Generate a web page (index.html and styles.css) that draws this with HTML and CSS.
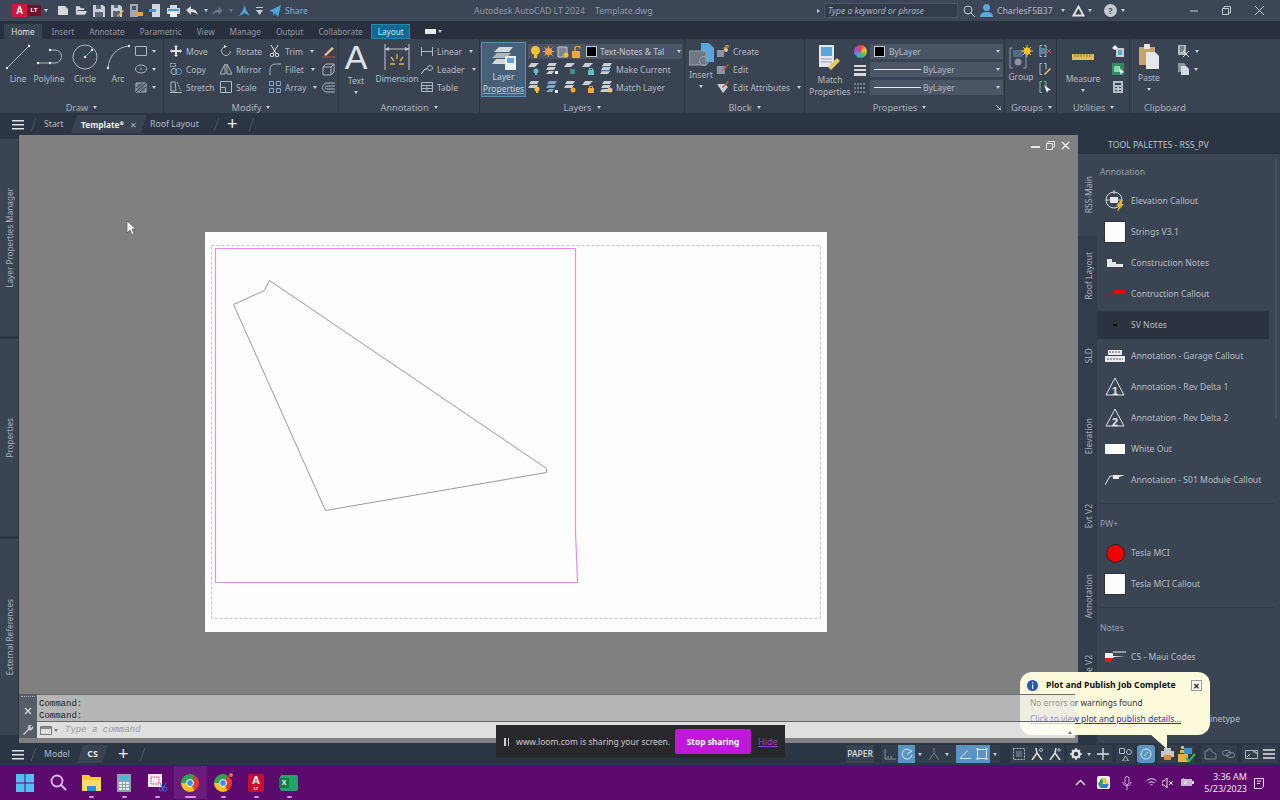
FILE: index.html
```html
<!DOCTYPE html>
<html lang="en">
<head>
    <meta charset="UTF-8">
    <title>Autodesk AutoCAD LT 2024 - Template.dwg</title>
    <link rel="stylesheet" href="styles.css">
</head>
<body>
<div class="app">

    <!-- Title bar -->
    <div class="titlebar">
        <div class="logo"><span class="logo-a">A</span><span class="logo-lt">LT</span></div>
        <i class="caret qa-first"></i>
        <div class="qa">
            <svg width="12" height="11" viewBox="0 0 12 11"><path d="M1 1h7l3 3v6H1z" fill="#d5d9de"/></svg>
            <svg width="12" height="11" viewBox="0 0 13 11"><path d="M1 10V1h4l1 2h4v2H3L1 10zM3 6h10l-2 4H1z" fill="#d5d9de"/></svg>
            <svg width="12" height="12" viewBox="0 0 12 12"><path d="M0 0h10l2 2v10H0z" fill="#c9ced5"/><path d="M3 0h5v4H3zM2 7h8v5H2z" fill="#5a6577"/></svg>
            <svg width="13" height="12" viewBox="0 0 13 12"><path d="M0 0h9l2 2v10H0z" fill="#c9ced5"/><path d="M3 0h4v3H3zM2 6h7v6H2z" fill="#5a6577"/><path d="M6 11l6-6 1 1-6 6z" fill="#e8b23a"/></svg>
            <svg width="13" height="13" viewBox="0 0 13 13"><path d="M0 0h8v13H0z" fill="#9fa8b3"/><path d="M2 2h4v4H2z" fill="#4c5768"/><path d="M6 8h7v4H6z" fill="#e8a63a"/></svg>
            <svg width="12" height="13" viewBox="0 0 12 13"><path d="M3 0h8v13H3z" fill="#d5d9de"/><path d="M0 5h7v3H0z" fill="#3f9fd0"/></svg>
            <svg width="13" height="12" viewBox="0 0 13 12"><path d="M3 0h7v3H3zM0 3h13v6H0z" fill="#d5d9de"/><path d="M3 7h7v5H3z" fill="#eef0f2"/><path d="M1 4h11v2H1z" fill="#3f9fd0"/></svg>
            <svg width="12" height="9" viewBox="0 0 12 9"><path d="M5 0v3c4 0 6 2 7 6-2-2-4-3-7-3v3L0 4z" fill="#d5d9de"/></svg>
            <i class="caret"></i>
            <svg class="gap-s" width="11" height="8" viewBox="0 0 12 9"><path d="M7 0v3C3 3 1 5 0 9c2-2 4-3 7-3v3l5-5z" fill="#6c7686"/></svg>
            <i class="caret dim"></i>
            <svg width="11" height="11" viewBox="0 0 11 11"><path d="M5.500 0L7 5l4 6-5.500-3L0 11l4-6z" fill="#4da3dc"/></svg>
            <svg width="7" height="8" viewBox="0 0 7 8"><path d="M0 0h7v1H0zM0 3h7L3.500 8z" fill="#c9ced5"/></svg>
            <svg width="12" height="12" viewBox="0 0 12 12"><path d="M0 6l12-6-3 12-3-4-2 3V7z" fill="#4da3dc"/></svg>
            <span class="share">Share</span>
        </div>
        <div class="app-name">Autodesk AutoCAD LT 2024<span class="doc-name">Template.dwg</span></div>
        <i class="search-tri"></i>
        <div class="search-box">Type a keyword or phrase</div>
        <svg class="search-glass" width="12" height="12" viewBox="0 0 12 12"><circle cx="5" cy="5" r="4" fill="none" stroke="#c2c8d0"/><path d="M8 8l4 4" stroke="#c2c8d0"/></svg>
        <svg class="user-icon" width="13" height="13" viewBox="0 0 13 13"><circle cx="6.500" cy="3.500" r="3.500" fill="#5aa6e0"/><path d="M0 13c0-4 3-5 6.500-5s6.500 1 6.500 5z" fill="#5aa6e0"/></svg>
        <span class="user-name">CharlesF5B37</span>
        <i class="caret user-caret"></i>
        <svg class="tri-icon" width="13" height="12" viewBox="0 0 13 12"><path d="M6.500 1.500L1.500 10.500h10z" fill="none" stroke="#dfe3e8" stroke-width="1.800"/></svg>
        <i class="caret"></i>
        <div class="help">?</div>
        <i class="caret"></i>
        <div class="win-btns">
            <svg width="8" height="8" viewBox="0 0 8 8"><path d="M0 4h8" stroke="#c2c8d0"/></svg>
            <svg width="9" height="9" viewBox="0 0 9 9"><path d="M2 2V.500h6.500V7H7M.500 2.500h6v6h-6z" fill="none" stroke="#c2c8d0"/></svg>
            <svg width="9" height="9" viewBox="0 0 9 9"><path d="M0 0l9 9M9 0L0 9" stroke="#c2c8d0"/></svg>
        </div>
    </div>

    <!-- Ribbon tabs -->
    <div class="ribbon-tabs">
        <span class="rtab home">Home</span>
        <span class="rtab">Insert</span>
        <span class="rtab">Annotate</span>
        <span class="rtab">Parametric</span>
        <span class="rtab">View</span>
        <span class="rtab">Manage</span>
        <span class="rtab">Output</span>
        <span class="rtab">Collaborate</span>
        <span class="rtab layout">Layout</span>
        <span class="rtab-extra"><b></b><i class="caret"></i></span>
    </div>

    <!-- Ribbon -->
    <div class="ribbon">

        <div class="panel p-draw">
            <div class="panel-body">
                <div class="tool w-32">
                    <svg width="26" height="26" viewBox="0 0 26 26"><path d="M2 24L24 2" stroke="#aeb6c0"/><circle cx="2" cy="24" r="1.200" fill="#e6e9ed"/><circle cx="24" cy="2" r="1.200" fill="#e6e9ed"/></svg>
                    <span>Line</span>
                </div>
                <div class="tool w-30">
                    <svg width="26" height="26" viewBox="0 0 26 26"><path d="M14 6h5a6.500 6.500 0 0 1 0 13H2" fill="none" stroke="#aeb6c0"/><circle cx="14" cy="6" r="1.200" fill="#e6e9ed"/><circle cx="2" cy="19" r="1.200" fill="#e6e9ed"/><circle cx="14" cy="19" r="1.200" fill="#e6e9ed"/></svg>
                    <span>Polyline</span>
                </div>
                <div class="tool w-42">
                    <svg width="26" height="26" viewBox="0 0 26 26"><circle cx="13" cy="13" r="12" fill="none" stroke="#aeb6c0"/><path d="M13 13l7-7" stroke="#5aa6e0"/><circle cx="13" cy="13" r="1.200" fill="#e6e9ed"/><circle cx="20" cy="6" r="1.200" fill="#e6e9ed"/></svg>
                    <span>Circle</span>
                </div>
                <div class="tool w-24">
                    <svg width="24" height="26" viewBox="0 0 24 26"><path d="M2 24C3 12 11 3 23 2" fill="none" stroke="#aeb6c0"/><circle cx="2" cy="24" r="1.200" fill="#e6e9ed"/><circle cx="23" cy="2" r="1.200" fill="#e6e9ed"/></svg>
                    <span>Arc</span>
                </div>
                <div class="draw-small">
                    <div><svg width="12" height="10" viewBox="0 0 12 10"><path d="M.500.500h11v9H.500z" fill="none" stroke="#aeb6c0"/></svg><i class="caret"></i></div>
                    <div><svg width="12" height="10" viewBox="0 0 12 10"><ellipse cx="6" cy="5" rx="5.500" ry="4" fill="none" stroke="#aeb6c0"/><circle cx="6" cy="5" r="1" fill="#5aa6e0"/></svg><i class="caret"></i></div>
                    <div><svg width="12" height="11" viewBox="0 0 12 11"><path d="M1 1h10v9H1z" fill="#6d7785" stroke="#aeb6c0"/><path d="M1 10l10-9M1 6l6-5M5 10l6-5" stroke="#3a4351"/></svg><i class="caret"></i></div>
                </div>
            </div>
            <div class="panel-title">Draw<i class="caret"></i></div>
        </div>

        <div class="panel p-modify">
            <div class="panel-body modify-grid">
                <div class="row"><svg width="12" height="12" viewBox="0 0 12 12"><path d="M6 0l2 2H7v3h3V4l2 2-2 2V7H7v3h1l-2 2-2-2h1V7H2v1L0 6l2-2v1h3V2H4z" fill="#dfe3e8"/></svg>Move</div>
                <div class="row"><svg width="12" height="12" viewBox="0 0 12 12"><path d="M10.500 6a4.500 4.500 0 1 1-4.500-4.500" fill="none" stroke="#aeb6c0"/><path d="M4 0l3 1.500L4 3z" fill="#dfe3e8"/></svg>Rotate</div>
                <div class="row"><svg width="12" height="12" viewBox="0 0 12 12"><circle cx="3" cy="10" r="1.800" fill="none" stroke="#dfe3e8"/><circle cx="8" cy="10" r="1.800" fill="none" stroke="#dfe3e8"/><path d="M4 8.500L9 0M7 8.500L2 0" stroke="#dfe3e8"/></svg>Trim<i class="caret"></i></div>
                <svg width="13" height="13" viewBox="0 0 13 13"><path d="M2 10L10 2l2 1.500L4 11z" fill="#e8c48a"/><path d="M0 12h13" stroke="#d0463a"/></svg>

                <div class="row"><svg width="12" height="12" viewBox="0 0 12 12"><path d="M.500.500h5v3h-5z" fill="none" stroke="#aeb6c0" stroke-dasharray="2 1"/><circle cx="4" cy="8.500" r="3" fill="none" stroke="#aeb6c0"/><circle cx="8.500" cy="8.500" r="3" fill="none" stroke="#5aa6e0"/></svg>Copy</div>
                <div class="row"><svg width="12" height="12" viewBox="0 0 12 12"><path d="M5 1v10H0zM7 1v10h5z" fill="none" stroke="#aeb6c0"/></svg>Mirror</div>
                <div class="row"><svg width="12" height="12" viewBox="0 0 12 12"><path d="M1 12V7q0-6 6-6h5" fill="none" stroke="#aeb6c0"/></svg>Fillet<i class="caret"></i></div>
                <svg width="13" height="13" viewBox="0 0 13 13"><path d="M1 4h8v8H1zM1 4l3-3h8v8l-3 3M9 4l3-3" fill="none" stroke="#aeb6c0"/></svg>

                <div class="row"><svg width="12" height="12" viewBox="0 0 12 12"><path d="M1 1h4l1 9H1zM0 11.500h12" fill="none" stroke="#aeb6c0"/><path d="M7 1l4 9" stroke="#aeb6c0" stroke-dasharray="2 1"/></svg>Stretch</div>
                <div class="row"><svg width="12" height="12" viewBox="0 0 12 12"><path d="M.500.500h11v11H.500zM.500 6.500h5v5" fill="none" stroke="#aeb6c0"/></svg>Scale</div>
                <div class="row"><svg width="12" height="12" viewBox="0 0 12 12"><path d="M.500.500h4v4h-4zM7.500.500h4v4h-4zM.500 7.500h4v4h-4zM7.500 7.500h4v4h-4z" fill="none" stroke="#7fa8cc"/></svg>Array<i class="caret"></i></div>
                <svg width="13" height="11" viewBox="0 0 13 11"><path d="M13 1H5a4.500 4.500 0 0 0 0 9h8M13 4H5a1.500 1.500 0 0 0 0 3h8" fill="none" stroke="#aeb6c0"/></svg>
            </div>
            <div class="panel-title">Modify<i class="caret"></i></div>
        </div>

        <div class="panel p-anno">
            <div class="panel-body">
                <div class="tool w-34 t-text"><span class="big-a">A</span><span>Text</span><i class="caret"></i></div>
                <div class="tool w-48">
                    <svg width="26" height="26" viewBox="0 0 26 26"><path d="M1 0v26M25 0v26M1 5h24" fill="none" stroke="#c2c8d0"/><path d="M1 5l4-2v4zM25 5l-4-2v4z" fill="#c2c8d0"/><path d="M13 10v5M7 13l3 4M19 13l-3 4M6 20h5M15 20h5" stroke="#e8b23a" stroke-width="1.300"/></svg>
                    <span>Dimension</span>
                </div>
                <div class="anno-col">
                    <div class="row"><svg width="12" height="9" viewBox="0 0 12 9"><path d="M.500 0v9M11.500 0v9M1 4.500h10" stroke="#aeb6c0"/></svg>Linear<i class="caret"></i></div>
                    <div class="row"><svg width="12" height="9" viewBox="0 0 12 9"><path d="M0 9l4-5h2" fill="none" stroke="#dfe3e8"/><circle cx="9" cy="3" r="2.500" fill="none" stroke="#aeb6c0"/></svg>Leader<i class="caret"></i></div>
                    <div class="row"><svg width="12" height="10" viewBox="0 0 12 10"><path d="M.500.500h11v9H.500zM.500 3.500h11M.500 6.500h11M6 3.500v6" fill="none" stroke="#aeb6c0"/></svg>Table</div>
                </div>
            </div>
            <div class="panel-title">Annotation<i class="caret"></i></div>
        </div>

        <div class="panel p-layers">
            <div class="panel-body">
                <div class="layer-btn">
                    <svg width="26" height="26" viewBox="0 0 26 26"><path d="M8 2h14l-4 5H3z" fill="#d5d9de"/><path d="M6 8h14l-4 5H1z" fill="#aeb6c0"/><path d="M5 14h10v5H1z" fill="#d5d9de"/><path d="M14 11h11v14H14z" fill="#eef0f2"/><path d="M16 13h7v5h-7z" fill="#5aa6e0"/></svg>
                    <span>Layer</span><span class="l2">Properties</span>
                </div>
                <div class="layer-col">
                    <div class="layer-combo">
                        <svg width="9" height="12" viewBox="0 0 9 12"><circle cx="4.500" cy="4.500" r="4.500" fill="#f2c230"/><path d="M3 9h3v3H3z" fill="#f2c230"/></svg>
                        <svg width="11" height="11" viewBox="0 0 11 11"><circle cx="5.500" cy="5.500" r="3.500" fill="#f0a830"/><path d="M5.500 0v11M0 5.500h11M1.500 1.500l8 8M9.500 1.500l-8 8" stroke="#f0a830"/></svg>
                        <svg width="12" height="12" viewBox="0 0 12 12"><path d="M1 1h9v10H1z" fill="#7a8492" stroke="#c2c8d0"/><circle cx="9" cy="9" r="2.500" fill="#f2c230"/></svg>
                        <svg width="11" height="12" viewBox="0 0 11 12"><path d="M3 5V2.500a2.500 2.500 0 0 1 5 0" fill="none" stroke="#f0a830" stroke-width="1.300"/><path d="M0 5h8v7H0z" fill="#f0a830"/></svg>
                        <b class="swatch"></b>
                        <span class="combo-text">Text-Notes &amp; Tal</span>
                        <i class="caret"></i>
                    </div>
                    <div class="layer-row">
                        <svg width="12" height="12" viewBox="0 0 12 12"><path d="M3 0h8L7 4H0z" fill="#c9ced5"/><circle cx="8" cy="8" r="2.500" fill="#5fc4c4"/><path d="M7 10h2v2H7z" fill="#5fc4c4"/></svg>
                        <svg width="12" height="12" viewBox="0 0 12 12"><path d="M3 0h8L9 3H1zM2 4h8L8 7H0zM3 8h5L6 11H0z" fill="#c9ced5"/><path d="M9 8h3v3H9z" fill="#eef0f2"/></svg>
                        <svg width="12" height="12" viewBox="0 0 12 12"><path d="M3 0h8L7 4H0z" fill="#c9ced5"/><path d="M6 6h5v5H6z" fill="#3f8f8f"/></svg>
                        <svg width="12" height="12" viewBox="0 0 12 12"><path d="M3 0h8L7 4H0z" fill="#c9ced5"/><path d="M6 7h6v5H6z" fill="#5fc4c4"/><path d="M7.500 7V5.500h3V7" fill="none" stroke="#5fc4c4"/></svg>
                        <svg width="13" height="12" viewBox="0 0 13 12"><path d="M4 0h8L10 3H2zM3 4h8L9 7H1zM2 8h8L8 11H0z" fill="#c9ced5"/><path d="M2 4h9M1 8h9" stroke="#5aa6e0"/></svg>
                        <span class="lr-text">Make Current</span>
                    </div>
                    <div class="layer-row">
                        <svg width="12" height="12" viewBox="0 0 12 12"><path d="M3 0h8L9 3H1zM2 4h8L8 7H0z" fill="#c9ced5"/><circle cx="9" cy="8" r="2.500" fill="#f2c230"/><path d="M8 10h2v2H8z" fill="#f2c230"/></svg>
                        <svg width="12" height="12" viewBox="0 0 12 12"><path d="M3 0h8L9 3H1zM2 4h8L8 7H0zM3 8h5L6 11H0z" fill="#7fa8cc"/><path d="M9 9h3v3H9z" fill="#eef0f2"/></svg>
                        <svg width="12" height="12" viewBox="0 0 12 12"><path d="M3 0h8L9 3H1zM2 4h8L8 7H0z" fill="#c9ced5"/><circle cx="9" cy="9" r="2.500" fill="#f0a830"/></svg>
                        <svg width="12" height="12" viewBox="0 0 12 12"><path d="M3 0h8L7 4H0z" fill="#c9ced5"/><path d="M6 7h6v5H6z" fill="#f0a830"/><path d="M7.500 7V5.500h3V7" fill="none" stroke="#f0a830"/></svg>
                        <svg width="13" height="12" viewBox="0 0 13 12"><path d="M4 0h8L10 3H2zM3 4h8L9 7H1zM2 8h8L8 11H0z" fill="#c9ced5"/><circle cx="10" cy="9" r="2.500" fill="#e8c48a"/></svg>
                        <span class="lr-text">Match Layer</span>
                    </div>
                </div>
            </div>
            <div class="panel-title">Layers<i class="caret"></i></div>
        </div>

        <div class="panel p-block">
            <div class="panel-body">
                <div class="tool w-30 t-insert">
                    <svg width="25" height="24" viewBox="0 0 25 24"><path d="M12 0h8l5 5v14H12z" fill="#5aa6e0"/><path d="M0 8h17v14H0z" fill="#6d7785"/><path d="M0 8h17v14H0z" fill="none" stroke="#9aa3ae"/><circle cx="15" cy="18" r="4.500" fill="none" stroke="#9aa3ae"/></svg>
                    <span>Insert</span><i class="caret"></i>
                </div>
                <div class="block-col">
                    <div class="row"><svg width="12" height="12" viewBox="0 0 12 12"><path d="M0 5h7v7H0z" fill="#8a94a2"/><path d="M6 3h3V0h2v3" fill="none" stroke="#e8b23a"/><circle cx="9" cy="5" r="2" fill="#e8c48a"/></svg>Create</div>
                    <div class="row"><svg width="12" height="12" viewBox="0 0 12 12"><path d="M0 3h8v8H0z" fill="#8a94a2"/><path d="M5 7l6-6 1 1-6 6z" fill="#c9563a"/></svg>Edit</div>
                    <div class="row"><svg width="12" height="12" viewBox="0 0 12 12"><path d="M0 3h8l3 3-5 6z" fill="#c9ced5"/><path d="M5 6l6-6 1 1-6 6z" fill="#c9563a"/></svg>Edit Attributes<i class="caret"></i></div>
                </div>
            </div>
            <div class="panel-title">Block<i class="caret"></i></div>
        </div>

        <div class="panel p-props">
            <div class="panel-body">
                <div class="tool w-48 t-match">
                    <svg width="24" height="26" viewBox="0 0 24 26"><path d="M1 0h15v22H1z" fill="#e3e6ea"/><path d="M3 2h11v9H3z" fill="#5aa6e0"/><path d="M3 14h11M3 17h11" stroke="#9aa3ae"/><path d="M10 22l9-9 3 3-9 9z" fill="#e8c96a"/></svg>
                    <span>Match</span><span>Properties</span>
                </div>
                <div class="props-icons">
                    <b class="wheel"></b>
                    <svg width="12" height="11" viewBox="0 0 12 11"><path d="M0 0h12v2H0zM0 4h12v2H0zM0 8h12v3H0z" fill="#d5d9de"/></svg>
                    <svg width="12" height="11" viewBox="0 0 12 11"><path d="M0 1h12M0 5h12M0 9h12" stroke="#aeb6c0" stroke-dasharray="2 1"/></svg>
                </div>
                <div class="props-col">
                    <div class="combo"><b class="swatch"></b><span>ByLayer</span><i class="caret"></i></div>
                    <div class="combo"><b class="lw"></b><span>ByLayer</span><i class="caret"></i></div>
                    <div class="combo"><b class="lw"></b><span>ByLayer</span><i class="caret"></i></div>
                </div>
            </div>
            <div class="panel-title">Properties<i class="caret"></i><svg class="launcher" width="5" height="5" viewBox="0 0 5 5"><path d="M0 0l5 5M5 1v4H1" fill="none" stroke="#c2c8d0"/></svg></div>
        </div>

        <div class="panel p-groups">
            <div class="panel-body">
                <div class="tool w-30 t-group">
                    <svg width="24" height="24" viewBox="0 0 24 24"><path d="M4 3H1v20h3M14 23h3V8" fill="none" stroke="#8fa0b4"/><path d="M4 5h10v7H4z" fill="#4d6c8c"/><circle cx="9" cy="17" r="3.500" fill="#8a94a2"/><circle cx="18" cy="6" r="3.500" fill="#f2c230"/><path d="M18 0v12M12 6h12M14 2l8 8M22 2l-8 8" stroke="#f2c230"/></svg>
                    <span>Group</span>
                </div>
                <div class="groups-col">
                    <svg width="12" height="12" viewBox="0 0 12 12"><path d="M3 .500H1v11h2M5 .500h2v11H5" fill="none" stroke="#9fc0dc"/><path d="M7 3h-5v6h5" fill="#5d7fa0"/><path d="M8 4l4 4M12 4L8 8" stroke="#e0503f"/></svg>
                    <svg width="12" height="12" viewBox="0 0 12 12"><path d="M3 .500H1v11h2M5 .500h2v6" fill="none" stroke="#9fc0dc"/><path d="M5 11l6-6 1 1-6 6z" fill="#e8c96a"/></svg>
                    <svg width="12" height="12" viewBox="0 0 12 12"><path d="M3 .500H1v11h2M5 .500h2v6" fill="none" stroke="#6fc0a0"/><path d="M5 4l7 5-3 .500-1 2.500z" fill="#eef0f2"/></svg>
                </div>
            </div>
            <div class="panel-title">Groups<i class="caret"></i></div>
        </div>

        <div class="panel p-util">
            <div class="panel-body">
                <div class="tool w-50 t-measure">
                    <svg width="22" height="26" viewBox="0 0 22 26"><path d="M0 10h22v6H0z" fill="#e0bb5c"/><path d="M3 10v3M6 10v3M9 10v3M12 10v3M15 10v3M18 10v3" stroke="#8c6f2a"/></svg>
                    <span>Measure</span><i class="caret"></i>
                </div>
                <div class="util-col">
                    <svg width="12" height="12" viewBox="0 0 12 12"><path d="M4 3h8v9H4z" fill="#c9ced5"/><path d="M6 5h4v5H6z" fill="#5aa6e0"/><path d="M0 3l3-3 3 3-3 2z" fill="#eef0f2"/></svg>
                    <svg width="12" height="12" viewBox="0 0 12 12"><path d="M0 0h12v12H0z" fill="#2f8f63"/><path d="M2 3h6v6H2z" fill="#8fd0ae"/><path d="M7 5l5 4-2 1-1 2z" fill="#eef0f2"/></svg>
                    <svg width="10" height="12" viewBox="0 0 10 12"><path d="M0 0h10v12H0z" fill="#b5bcc6"/><path d="M2 2h6v2H2z" fill="#3a4351"/><path d="M2 6h2v1H2zM6 6h2v1H6zM2 9h2v1H2zM6 9h2v1H6z" fill="#3a4351"/></svg>
                </div>
            </div>
            <div class="panel-title">Utilities<i class="caret"></i></div>
        </div>

        <div class="panel p-clip">
            <div class="panel-body">
                <div class="tool w-36 t-paste">
                    <svg width="20" height="25" viewBox="0 0 20 25"><path d="M0 3h16v18H0z" fill="#c9a06a"/><path d="M5 0h6v5H5z" fill="#e3e6ea"/><path d="M7 8h9l4 4v13H7z" fill="#e3e6ea"/></svg>
                    <span>Paste</span><i class="caret"></i>
                </div>
                <div class="clip-col">
                    <div><svg width="12" height="12" viewBox="0 0 12 12"><path d="M0 0h8v10H0z" fill="#aeb6c0"/><path d="M2 2h4M2 4h4M2 6h3" stroke="#3a4351"/><path d="M5 6l6 6M11 6l-6 6" stroke="#dfe3e8"/></svg><i class="caret"></i></div>
                    <div><svg width="11" height="12" viewBox="0 0 11 12"><path d="M0 0h6l2 2v7H0z" fill="#8a94a2"/><path d="M3 3h5l3 3v6H3z" fill="#d5d9de"/></svg><i class="caret"></i></div>
                </div>
            </div>
            <div class="panel-title">Clipboard</div>
        </div>
    </div>

    <!-- Drawing tabs -->
    <div class="filetabs">
        <div class="burger"><b></b><b></b><b></b></div>
        <i class="slash"></i>
        <span class="ftab">Start</span>
        <span class="ftab active">Template*<em>&#10005;</em></span>
        <span class="ftab roof">Roof Layout</span>
        <i class="slash roof-end"></i>
        <span class="plus">+</span>
        <i class="slash"></i>
    </div>

    <!-- Main area -->
    <div class="main">
        <div class="side-strip">
            <div class="side-seg s1"><span>Layer Properties Manager</span></div>
            <div class="side-seg s2"><span>Properties</span></div>
            <div class="side-seg s3"><span>External References</span></div>
        </div>

        <div class="canvas">
            <svg class="cursor" width="11" height="16" viewBox="0 0 11 16"><path d="M1 1v12l3-3 2 5 2-1-2-5h4z" fill="#fff" stroke="#555" stroke-width=".7"/></svg>
            <div class="vp-btns">
                <svg width="9" height="9" viewBox="0 0 9 9"><path d="M0 5h9v2H0z" fill="#e8e8e8"/></svg>
                <svg width="9" height="9" viewBox="0 0 9 9"><path d="M2 2V.500h6.500V6H7M.500 2.500h6v6h-6z" fill="none" stroke="#e8e8e8"/></svg>
                <svg width="9" height="9" viewBox="0 0 9 9"><path d="M1 1l7 7M8 1L1 8" stroke="#e8e8e8" stroke-width="1.600"/></svg>
            </div>
            <div class="paper">
                <svg width="622" height="400" viewBox="0 0 622 400">
                    <rect x="6.500" y="13.500" width="609" height="373" fill="none" stroke="#c4c4c4" stroke-dasharray="3 2"/>
                    <path d="M370.500 16.500H10.500V350.500H372.500L370.500 300Z" fill="none" stroke="#e68ee6" stroke-width="1.200"/>
                    <path d="M28.500 72.500L59.500 58.500L64.500 48.500L341.500 236.500V240.500L120.500 278.500Z" fill="none" stroke="#9a9a9a"/>
                </svg>
            </div>
        </div>

        <div class="palette">
            <div class="pal-tabs">
                <div class="pal-tab t-active"><span>RSS-Main</span></div>
                <div class="pal-tab"><span>Roof Layout</span></div>
                <div class="pal-tab"><span>SLD</span></div>
                <div class="pal-tab"><span>Elevation</span></div>
                <div class="pal-tab"><span>Evt V2</span></div>
                <div class="pal-tab"><span>Annotation</span></div>
                <div class="pal-tab"><span>Module V2</span></div>
            </div>
            <div class="pal-right">
                <div class="pal-title">TOOL PALETTES - RSS_PV</div>
                <div class="pal-body">
                    <b class="pal-scroll"></b>
                    <div class="pal-group first">Annotation</div>
                    <div class="pal-item"><div class="pi">
                        <svg width="22" height="22" viewBox="0 0 22 22"><circle cx="10" cy="10" r="8" fill="none" stroke="#d5d9de"/><path d="M2 10h16M10 0v4" stroke="#d5d9de"/><path d="M6 7h8v6H6z" fill="#e3e6ea"/><path d="M17 10l-5 6h3l-2 6 7-8h-3l2-4z" fill="#e8b23a"/></svg>
                    </div>Elevation Callout</div>
                    <div class="pal-item"><div class="pi"><b class="white-sq"></b></div>Strings V3.1</div>
                    <div class="pal-item"><div class="pi">
                        <svg width="16" height="8" viewBox="0 0 16 8"><path d="M0 0h5v3h4v2h7v3H0z" fill="#e3e6ea"/></svg>
                    </div>Construction Notes</div>
                    <div class="pal-item"><div class="pi">
                        <svg width="20" height="10" viewBox="0 0 20 10"><path d="M9 1h11v4H9z" fill="#f00000"/><path d="M0 9l9-6" stroke="#a02020"/></svg>
                    </div>Contruction Callout</div>
                    <div class="pal-item selected"><div class="pi">
                        <svg width="4" height="2" viewBox="0 0 4 2"><path d="M0 0h4v2H0z" fill="#0a0a0a"/></svg>
                    </div>SV Notes</div>
                    <div class="pal-item"><div class="pi">
                        <svg width="20" height="12" viewBox="0 0 20 12"><path d="M3 0h14v5H3zM0 6h20v6H0z" fill="#e8ebee"/><path d="M4 2h12M2 9h16" stroke="#4a5464" stroke-dasharray="2 1"/></svg>
                    </div>Annotation - Garage Callout</div>
                    <div class="pal-item"><div class="pi"><div class="delta"><svg width="20" height="19" viewBox="0 0 20 19"><path d="M10 1L1 18h18z" fill="none" stroke="#dfe3e8"/></svg><span>1</span></div></div>Annotation - Rev Delta 1</div>
                    <div class="pal-item"><div class="pi"><div class="delta"><svg width="20" height="19" viewBox="0 0 20 19"><path d="M10 1L1 18h18z" fill="none" stroke="#dfe3e8"/></svg><span>2</span></div></div>Annotation - Rev Delta 2</div>
                    <div class="pal-item"><div class="pi"><b class="white-out"></b></div>White Out</div>
                    <div class="pal-item"><div class="pi">
                        <svg width="20" height="10" viewBox="0 0 20 10"><path d="M0 10L5 1h3" fill="none" stroke="#dfe3e8"/><path d="M8 0h12l-6 2v2H8z" fill="#e8ebee"/></svg>
                    </div>Annotation - S01 Module Callout</div>
                    <div class="pal-group pw">PW+</div>
                    <div class="pal-item"><div class="pi"><b class="red-dot"></b></div>Tesla MCI</div>
                    <div class="pal-item"><div class="pi"><b class="white-sq"></b></div>Tesla MCI Callout</div>
                    <div class="pal-group">Notes</div>
                    <div class="pal-item"><div class="pi">
                        <svg width="21" height="11" viewBox="0 0 21 11"><path d="M0 2h8v3h13L9 6 8 7H0z" fill="#eef0f2"/><path d="M0 7h8l-2 4H0z" fill="#e02020"/><path d="M8 1h13" stroke="#eef0f2"/></svg>
                    </div>CS - Maui Codes</div>
                    <div class="pal-item"></div>
                    <div class="pal-item clipped">inetype</div>
                </div>
            </div>
        </div>
    </div>

    <!-- Layout tabs and status bar -->
    <div class="statusbar">
        <div class="burger"><b></b><b></b><b></b></div>
        <i class="slash"></i>
        <span class="ltab">Model</span>
        <span class="ltab active">CS</span>
        <span class="plus">+</span>
        <i class="slash"></i>
        <div class="status-right">
            <span class="paper-btn">PAPER</span>
            <div class="st-group g-snap">
                <span class="st"><svg width="12" height="11" viewBox="0 0 12 11"><path d="M1 0v10h11" fill="none" stroke="#8a94a2"/><path d="M3 8h2M6 8h2" stroke="#8a94a2"/></svg></span>
                <span class="st on"><svg width="12" height="12" viewBox="0 0 12 12"><path d="M10 3a5 5 0 1 0 1 4" fill="none" stroke="#dfe8f2"/><path d="M6 6l5-3" stroke="#dfe8f2"/></svg></span>
                <i class="caret st-caret"></i>
                <span class="st"><svg width="10" height="12" viewBox="0 0 10 12"><path d="M5 0v5M0 12l5-7 5 7" fill="none" stroke="#7a8492"/></svg></span>
                <i class="caret st-caret"></i>
                <span class="st on st-angle"><svg width="12" height="10" viewBox="0 0 12 10"><path d="M12 9.500H1L9 1" fill="none" stroke="#dfe8f2"/></svg></span>
                <span class="st on"><svg width="12" height="12" viewBox="0 0 12 12"><path d="M1.500 1.500h9v9h-9z" fill="none" stroke="#dfe8f2"/><path d="M0 1h3M0 11h3M9 1h3M9 11h3" stroke="#dfe8f2"/></svg></span>
                <i class="caret st-caret"></i>
            </div>
            <div class="st-group g-anno">
                <span class="st"><svg width="12" height="12" viewBox="0 0 12 12"><path d="M.500.500h11v11H.500z" fill="none" stroke="#aeb6c0" stroke-dasharray="2 1"/><path d="M3 3h6v6H3z" fill="#5d6777"/></svg></span>
                <span class="st"><svg width="13" height="12" viewBox="0 0 13 12"><path d="M5 0l1 5-5 7M6 5l5 7" fill="none" stroke="#dfe3e8" stroke-width="1.500"/><circle cx="10" cy="2" r="1.500" fill="none" stroke="#aeb6c0"/></svg></span>
                <span class="st"><svg width="13" height="12" viewBox="0 0 13 12"><path d="M7 0L6 5l-5 7M6 5l5 7" fill="none" stroke="#dfe3e8" stroke-width="1.500"/><path d="M10 0v4M8 2h4" stroke="#aeb6c0"/></svg></span>
            </div>
            <div class="st-group g-gear">
                <span class="st"><svg width="12" height="12" viewBox="0 0 12 12"><circle cx="6" cy="6" r="3.500" fill="none" stroke="#dfe3e8" stroke-width="2.500"/><path d="M6 0v2M6 10v2M0 6h2M10 6h2M2 2l1.500 1.500M10 2L8.500 3.500M2 10l1.500-1.500M10 10L8.500 8.500" stroke="#dfe3e8" stroke-width="1.500"/></svg></span>
                <i class="caret st-caret"></i>
                <span class="st"><svg width="12" height="12" viewBox="0 0 12 12"><path d="M6 0v12M0 6h12" stroke="#dfe3e8" stroke-width="1.300"/></svg></span>
            </div>
            <div class="st-group g-shapes">
                <span class="st"><svg width="13" height="13" viewBox="0 0 13 13"><path d="M.500.500h5v5h-5z" fill="none" stroke="#aeb6c0"/><circle cx="10" cy="4" r="2.500" fill="none" stroke="#aeb6c0"/><path d="M6.500 8l3 5h-6z" fill="none" stroke="#aeb6c0"/></svg></span>
            </div>
            <span class="st round"><svg width="12" height="12" viewBox="0 0 12 12"><circle cx="6" cy="6" r="5" fill="none" stroke="#dfe8f2"/><path d="M4 8l4-4" stroke="#dfe8f2"/></svg></span>
            <div class="st-group">
                <span class="st"><svg width="13" height="12" viewBox="0 0 13 12"><path d="M3 0h7v3H3zM0 3h13v6H0z" fill="#c2c8d0"/><path d="M3 7h7v5H3z" fill="#e08a3a"/></svg></span>
                <span class="st"><svg class="haz" width="18" height="16" viewBox="0 0 18 16"><path d="M3 0h3v3H3zM2 4h7v3H2zM0 8h10v8H0z" fill="#e8b23a"/><path d="M6 2h8v6H6z" fill="#3f8fd0"/><path d="M8 12l3 3 6-7" fill="none" stroke="#42b04a" stroke-width="2"/></svg></span>
            </div>
            <div class="st-group g-dim">
                <span class="st"><svg width="13" height="12" viewBox="0 0 13 12"><path d="M1 11V3h3V1h3v2l5 3v5z" fill="none" stroke="#7a8492"/></svg></span>
                <span class="st"><svg width="13" height="8" viewBox="0 0 13 8"><rect x=".5" y=".5" width="8" height="5" rx="2.500" fill="none" stroke="#7a8492"/><rect x="4.500" y="2.500" width="8" height="5" rx="2.500" fill="none" stroke="#7a8492"/></svg></span>
            </div>
            <div class="st-group g-last">
                <span class="st"><svg width="13" height="9" viewBox="0 0 13 9"><path d="M.500.500h12v8H.500z" fill="none" stroke="#aeb6c0"/><path d="M2 7l3-3M8 2h3v2" stroke="#dfe3e8"/></svg></span>
                <span class="st"><svg width="12" height="10" viewBox="0 0 12 10"><path d="M0 1h12M0 5h12M0 9h12" stroke="#dfe3e8" stroke-width="1.400"/></svg></span>
            </div>
        </div>
    </div>

    <!-- Windows taskbar -->
    <div class="taskbar">
        <div class="task-icons">
            <span class="task"><svg width="18" height="18" viewBox="0 0 18 18"><path d="M0 0h8.500v8.500H0zM9.500 0H18v8.500H9.500zM0 9.500h8.500V18H0zM9.500 9.500H18V18H9.500z" fill="#52c0f2"/></svg></span>
            <span class="task"><svg width="17" height="17" viewBox="0 0 17 17"><circle cx="7" cy="7" r="5.500" fill="none" stroke="#e0b8ee" stroke-width="1.800"/><path d="M11 11l5 5" stroke="#e0b8ee" stroke-width="2"/></svg></span>
            <span class="task pin"><svg width="19" height="16" viewBox="0 0 19 16"><path d="M0 0h7l2 2h10v14H0z" fill="#f5c83e"/><path d="M0 5h19v11H0z" fill="#fbdc6a"/><path d="M5 11h9v5H5z" fill="#2b8fd0"/></svg></span>
            <span class="task pin"><svg width="14" height="18" viewBox="0 0 14 18"><path d="M0 0h14v18H0z" fill="#8aa2a8"/><path d="M2 2h10v4H2z" fill="#48b8d8"/><path d="M2 8h3v2H2zM6 8h2v2H6zM9 8h3v2H9zM2 11h3v2H2zM6 11h2v2H6zM9 11h3v2H9zM2 14h3v2H2zM6 14h2v2H6zM9 14h3v2H9z" fill="#e8eef0"/></svg></span>
            <span class="task pin"><svg width="19" height="18" viewBox="0 0 19 18"><path d="M0 0h14v13H0z" fill="#f4eef6"/><path d="M3 3h8v7H3z" fill="none" stroke="#d04040" stroke-dasharray="1.500 1"/><circle cx="13" cy="15" r="2" fill="none" stroke="#3a70e0"/><circle cx="17" cy="15" r="2" fill="none" stroke="#3a70e0"/><path d="M12 9l3 5M18 9l-3 5" stroke="#3a70e0"/></svg></span>
            <span class="task current pin"><b class="chrome"><b></b></b></span>
            <span class="task pin"><b class="chrome"><b></b></b><b class="chrome-badge"></b></span>
            <span class="task pin"><div class="acad">A<small>LT</small></div></span>
            <span class="task pin"><div class="excel"><b>X</b></div></span>
        </div>
        <div class="tray">
            <svg width="11" height="7" viewBox="0 0 11 7"><path d="M1 6l4.500-4.500L10 6" fill="none" stroke="#efe4f2" stroke-width="1.300"/></svg>
            <span class="drive"><svg width="11" height="10" viewBox="0 0 11 10"><path d="M3.500 0h4l3.500 6H7z" fill="#f4c430"/><path d="M3.500 0L0 6l2 4 3.500-6z" fill="#2aa05a"/><path d="M2 10h7l2-4H4z" fill="#3a78e0"/></svg></span>
            <svg class="t-mic" width="10" height="14" viewBox="0 0 10 14"><rect x="3" y=".5" width="4" height="8" rx="2" fill="none" stroke="#d9a8e6"/><path d="M1 6c0 5 8 5 8 0M5 10v4" fill="none" stroke="#d9a8e6"/></svg>
            <svg class="t-wifi" width="11" height="9" viewBox="0 0 11 9"><path d="M.500 3c3-3 7-3 10 0M2.500 5c2-1.500 4-1.500 6 0M4.500 7c.5-.5 1.500-.5 2 0" fill="none" stroke="#efe4f2"/></svg>
            <svg width="12" height="10" viewBox="0 0 12 10"><path d="M0 3h2l3-3v10L2 7H0z" fill="none" stroke="#efe4f2"/><path d="M7 3l4 4M11 3L7 7" stroke="#efe4f2"/></svg>
            <svg class="t-batt" width="13" height="9" viewBox="0 0 13 9"><path d="M0 1h11v7H0z" fill="#c9b0d6"/><path d="M11 3h2v3h-2z" fill="#efe4f2"/><path d="M2 0l4 4-3 2" stroke="#fff" fill="none"/></svg>
            <div class="clock"><span>3:36 AM</span><span>5/23/2023</span></div>
            <svg width="12" height="12" viewBox="0 0 12 12"><path d="M1.500 1.500h9v8l-2 2h-7z" fill="none" stroke="#efe4f2"/><path d="M4 4h4M4 6.500h3" stroke="#efe4f2"/></svg>
        </div>
    </div>

    <!-- Overlays -->
    <div class="balloon">
        <div class="balloon-head">
            <svg width="11" height="11" viewBox="0 0 11 11"><circle cx="5.500" cy="5.500" r="5.500" fill="#2458b8"/><path d="M5 2h1.200v1.200H5zM5 4.500h1.200V9H5z" fill="#fff"/></svg>
            <strong>Plot and Publish Job Complete</strong>
            <span class="balloon-x">&#10005;</span>
        </div>
        <div class="balloon-msg">No errors or warnings found</div>
        <a class="balloon-link">Click to view plot and publish details...</a>
    </div>
    <div class="balloon-tail"></div>

    <div class="cmd">
        <div class="cmd-side">
            <span class="cmd-dots"></span>
            <svg width="8" height="8" viewBox="0 0 8 8"><path d="M1 1l6 6M7 1L1 7" stroke="#d5d9de" stroke-width="1.300"/></svg>
            <svg width="11" height="11" viewBox="0 0 11 11"><path d="M0 10l5-5a3 3 0 0 1 4-4L7 3l1 1 2-2a3 3 0 0 1-4 4l-5 5z" fill="#c2c8d0"/></svg>
        </div>
        <div class="cmd-main">
            <div class="cmd-log"><div>Command:</div><div>Command:</div></div>
            <div class="cmd-input">
                <svg width="12" height="9" viewBox="0 0 12 9"><path d="M.500.500h11v8H.500z" fill="none" stroke="#777"/><path d="M1 1h10v2H1z" fill="#888"/></svg>
                <i class="caret cmd-caret"></i>
                <span>Type a command</span>
                <i class="cmd-up"></i>
            </div>
        </div>
    </div>

    <div class="loom">
        <span class="pause"><b></b><b></b></span>
        <span class="loom-text">www.loom.com is sharing your screen.</span>
        <span class="stop">Stop sharing</span>
        <span class="hide">Hide</span>
    </div>
</div>
</body>
</html>
```

FILE: styles.css
```css
html, body { margin: 0; padding: 0; width: 1280px; height: 800px; overflow: hidden; }
body { font-family: "Noto Sans", sans-serif; font-size: 8.5px; color: #b4bbc5; background: #2b3543; }
svg { display: block; flex: none; }

.app { position: relative; display: flex; flex-direction: column; width: 1280px; height: 800px; overflow: hidden; }

.caret { display: inline-block; flex: none; width: 0; height: 0; border-left: 2.5px solid transparent; border-right: 2.5px solid transparent; border-top: 3px solid #c8cdd4; }
.caret.dim { border-top-color: #6c7686; }
.slash { display: block; flex: none; width: 1px; height: 13px; background: #4b5564; transform: skewX(-20deg); }

/* Title bar */
.titlebar { display: flex; align-items: center; height: 21px; background: #3d4656; padding-left: 12px; box-sizing: border-box; }
.logo { display: flex; height: 11px; width: 29px; font-family: "Liberation Sans", sans-serif; font-weight: bold; color: #fff; }
.logo-a { width: 15px; height: 13px; margin-top: -1px; background: #d8143c; font-size: 10px; line-height: 13px; text-align: center; }
.logo-lt { width: 14px; background: #6d1428; font-size: 6px; line-height: 11px; text-align: center; }
.qa-first { margin-left: 3px; }
.qa { display: flex; align-items: center; gap: 6px; margin-left: 9px; width: 417px; }
.gap-s { margin-left: -2px; }
.share { color: #7fb0d8; font-size: 8.5px; margin-left: -2px; }
.app-name { width: 343px; color: #8f98a5; font-size: 8.7px; white-space: nowrap; }
.doc-name { margin-left: 10px; }
.search-tri { width: 0; height: 0; border-left: 3px solid #c8cdd4; border-top: 2.5px solid transparent; border-bottom: 2.5px solid transparent; margin-right: 4px; }
.search-box { width: 134px; height: 15px; line-height: 14px; padding-left: 3px; background: #333c4b; border: 1px solid #4b5564; box-sizing: border-box; font-style: italic; color: #aab2bc; font-size: 8.5px; }
.search-glass { margin-left: 5px; }
.user-icon { margin-left: 5px; }
.user-name { margin-left: 4px; width: 62px; font-size: 8.7px; }
.user-caret { margin-left: 2px; }
.tri-icon { margin-left: 7px; margin-right: 3px; }
.help { width: 13px; height: 13px; margin-left: 12px; margin-right: 4px; border-radius: 50%; background: #c4c9d0; color: #4a5464; font-size: 9px; font-weight: bold; line-height: 13px; text-align: center; }
.win-btns { display: flex; align-items: center; gap: 24px; margin-left: 65px; }

/* Ribbon tabs */
.ribbon-tabs { display: flex; align-items: flex-end; height: 18px; background: #28303d; padding-left: 4px; }
.rtab { height: 15px; line-height: 15px; padding: 0 7.5px; color: #8f98a5; font-size: 8.2px; white-space: nowrap; }
.rtab.home { width: 38px; padding: 0; text-align: center; margin-right: 2px; background: #3a4351; color: #e0e4e8; }
.rtab.layout { margin-left: 1px; padding: 0 6.5px; background: #0f6a94; color: #cfe4f0; box-shadow: 0 0 0 1px #2a85ae inset; }
.rtab-extra { display: flex; align-items: center; gap: 2px; margin-left: 15px; height: 15px; }
.rtab-extra b { display: block; width: 11px; height: 5px; background: #e8ebee; }

/* Ribbon */
.ribbon { display: flex; height: 74px; background: #3a4351; }
.panel { display: flex; flex-direction: column; flex: none; box-sizing: border-box; border-right: 1px solid #2b3340; }
.panel-body { display: flex; height: 58px; padding-top: 3px; box-sizing: border-box; flex: none; }
.panel-title { position: relative; display: flex; align-items: center; justify-content: center; gap: 5px; flex: 1; color: #a8b0bb; font-size: 9.2px; padding-top: 4px; }
.p-draw { width: 164px; }
.p-modify { width: 175px; }
.p-anno { width: 141px; }
.p-layers { width: 205px; }
.p-block { width: 120px; }
.p-props { width: 200px; }
.p-groups { width: 52px; }
.p-util { width: 73px; }
.p-clip { flex: 1; border-right: none; }

.tool { display: flex; flex-direction: column; align-items: center; flex: none; line-height: 12px; white-space: nowrap; }
.tool svg { margin-bottom: 3px; margin-top: 2px; }
.tool .caret { margin-top: 4px; }
.w-24 { width: 24px; } .w-30 { width: 30px; } .w-32 { width: 32px; } .w-34 { width: 34px; }
.w-36 { width: 36px; } .w-42 { width: 42px; } .w-48 { width: 48px; } .w-50 { width: 50px; }
.p-draw .panel-body { padding-left: 2px; }

.draw-small { display: flex; flex-direction: column; margin-left: 5px; }
.draw-small div, .clip-col div { display: flex; align-items: center; gap: 5px; height: 18px; }

.row { display: flex; align-items: center; gap: 4px; height: 18px; white-space: nowrap; }
.row .caret { margin-left: 3px; }
.modify-grid { display: grid; grid-template-columns: 50px 49px 53px 13px; grid-auto-rows: 18px; align-items: center; padding-left: 6px; }

.big-a { font-family: "Liberation Sans", sans-serif; font-size: 34px; line-height: 31px; height: 33px; color: #dfe3e8; }

.layer-btn { display: flex; flex-direction: column; align-items: center; width: 45px; height: 55px; margin-left: 1px; box-sizing: border-box; border: 1px solid #5a8fb4; background: #46607a; padding-top: 2px; line-height: 12px; color: #c8d2dc; flex: none; }
.l2 { text-decoration: underline; text-decoration-color: #7fa8cc; }
.layer-col { display: flex; flex-direction: column; margin-left: 2px; width: 154px; padding-top: 2px; }
.layer-combo { display: flex; align-items: center; gap: 3px; height: 15px; margin-bottom: 1px; padding-left: 3px; background: #4b5566; }
.swatch { display: block; flex: none; width: 11px; height: 11px; background: #000; border: 1px solid #c4c9d0; box-sizing: border-box; }
.combo-text { width: 66px; overflow: hidden; white-space: nowrap; color: #c4cad2; }
.layer-combo .caret { margin-left: 8px; }
.layer-row { display: flex; align-items: center; gap: 6px; height: 18px; }
.lr-text { margin-left: -3px; white-space: nowrap; }

.t-insert { width: 32px; }
.t-insert svg { margin-top: 1px; margin-bottom: 2px; }

.t-match { margin-left: 1px; padding-top: 1px; }
.props-icons { display: flex; flex-direction: column; align-items: center; gap: 7px; width: 14px; margin-left: -1px; padding-top: 3px; }
.wheel { display: block; width: 13px; height: 13px; border-radius: 50%; background: conic-gradient(#e84040, #f0c030, #50c050, #40a0e0, #a050d0, #e84040); }
.props-col { display: flex; flex-direction: column; gap: 3px; margin-left: 3px; width: 133px; padding-top: 2px; }
.combo { display: flex; align-items: center; gap: 4px; height: 15px; padding-left: 4px; background: #4b5566; }
.combo span { flex: 1; }
.combo .caret { margin-right: 3px; }
.lw { display: block; flex: none; width: 47px; height: 1px; background: #e6e9ed; margin-right: -2px; }
.launcher { position: absolute; right: 3px; top: 8px; }
.p-props .panel-title { padding-right: 10px; }

.t-group { width: 32px; }
.t-group svg { margin-top: 3px; margin-bottom: 2px; }
.groups-col { display: flex; flex-direction: column; gap: 6px; padding-top: 3px; margin-left: 2px; }
.p-groups .panel-title { justify-content: flex-start; padding-left: 6px; }

.t-measure { margin-left: 1px; }
.util-col { display: flex; flex-direction: column; align-items: center; gap: 6px; width: 14px; padding-top: 3px; margin-left: 3px; }
.p-util .panel-title { justify-content: flex-start; padding-left: 16px; }

.t-paste { margin-left: 1px; }
.clip-col { margin-left: 11px; }
.p-clip .panel-title { justify-content: flex-start; padding-left: 14px; }

/* Drawing tabs */
.filetabs, .statusbar { display: flex; align-items: center; height: 22px; background: #2b3543; padding-left: 12px; flex: none; }
.burger { display: flex; flex-direction: column; gap: 3px; width: 12px; flex: none; margin-right: 9px; }
.burger b { display: block; height: 1px; background: #e0e4e8; box-shadow: 0 .5px 0 #e0e4e8; }
.ftab { font-size: 8.7px; white-space: nowrap; }
.ftab:nth-of-type(1) { margin-left: 10px; width: 27px; }
.ftab.active { display: flex; align-items: center; justify-content: center; gap: 6px; width: 76px; height: 18px; background: #3a4351; clip-path: polygon(6px 0, 100% 0, calc(100% - 6px) 100%, 0 100%); color: #e8ebee; font-size: 8.3px; font-weight: bold; }
.ftab.active em { font-style: normal; font-weight: normal; font-size: 8px; color: #aeb6c0; }
.ftab.roof { margin-left: 3px; width: 66px; }
.roof-end { margin-right: 10px; }
.plus { width: 24px; font-family: "Liberation Sans", sans-serif; font-size: 18px; line-height: 18px; color: #e8ebee; flex: none; }

/* Main */
.main { display: flex; height: 608px; flex: none; }
.side-strip { display: flex; flex-direction: column; width: 19px; padding-top: 4px; flex: none; box-sizing: border-box; }
.side-seg { display: flex; align-items: center; justify-content: center; width: 18px; background: #3a4453; margin-bottom: 3px; color: #a8b0bb; font-size: 8.2px; }
.side-seg span, .pal-tab span { writing-mode: vertical-rl; transform: rotate(180deg); white-space: nowrap; }
.s1 { height: 197px; }
.s2 { height: 197px; }
.s3 { height: 196px; }

.canvas { position: relative; width: 1059px; flex: none; background: #808080; }
.cursor { position: absolute; left: 107px; top: 85px; }
.vp-btns { position: absolute; right: 8px; top: 6px; display: flex; gap: 6px; }
.paper { position: absolute; left: 186px; top: 97px; width: 622px; height: 400px; background: #fdfdfd; }

.palette { display: flex; width: 202px; flex: none; }
.pal-tabs { display: flex; flex-direction: column; width: 19px; padding-top: 19px; box-sizing: border-box; background: #2b3543; }
.pal-tab { display: flex; align-items: center; justify-content: center; height: 80px; padding-left: 1px; background: #333c4a; color: #a8b0bb; font-size: 8.5px; }
.pal-tab.t-active { height: 82px; background: #3a4453; }
.pal-right { flex: 1; display: flex; flex-direction: column; }
.pal-title { height: 19px; line-height: 20px; padding-left: 11px; background: #2b3543; color: #bcc3cc; font-size: 8.7px; }
.pal-body { position: relative; flex: 1; background: #3a4453; overflow: hidden; }
.pal-scroll { position: absolute; right: 3px; top: 5px; width: 2px; height: 260px; background: #465061; }
.pal-group { height: 22px; line-height: 18px; padding-left: 3px; margin-top: 19.5px; color: #98a1ac; font-size: 8.6px; position: relative; }
.pal-group::before { content: ""; position: absolute; left: 3px; right: 6px; top: -12px; height: 1px; background: #333c4a; }
.pal-group.first { margin-top: 9px; }
.pal-group.first::before { display: none; }
.pal-group.pw { height: 23px; }
.pal-item { display: flex; align-items: center; height: 31px; padding-left: 6px; margin-right: 11px; color: #b8bec7; font-size: 8.6px; white-space: nowrap; box-sizing: border-box; }
.pi { display: flex; align-items: center; justify-content: center; width: 24px; height: 24px; margin-right: 4px; flex: none; }
.selected { height: 28px; margin-top: 2px; margin-bottom: 1px; background: #2b3240; }
.clipped { padding-left: 113px; }
.white-sq { display: block; width: 22px; height: 22px; background: #fdfdfd; border: 1px solid #2b3340; box-sizing: border-box; }
.white-out { display: block; width: 20px; height: 10px; background: #fdfdfd; }
.red-dot { display: block; width: 19px; height: 19px; border-radius: 50%; background: #f00000; border: 1px solid #222; box-sizing: border-box; }
.delta { position: relative; width: 20px; height: 19px; }
.delta span { position: absolute; left: 0; right: 0; bottom: -1px; text-align: center; font-family: "Liberation Sans", sans-serif; font-size: 11px; font-weight: bold; color: #e8ebee; }

/* Status bar */
.status-right { display: flex; align-items: center; gap: 3px; margin-left: auto; padding-right: 2px; }
.ltab { font-size: 8.7px; }
.ltab:nth-of-type(1) { margin-left: 10px; width: 33px; }
.ltab.active { display: flex; align-items: center; justify-content: center; width: 31px; height: 18px; margin-right: 10px; background: #3a4351; clip-path: polygon(6px 0, 100% 0, calc(100% - 6px) 100%, 0 100%); color: #e8ebee; font-weight: bold; }
.paper-btn { display: block; width: 28px; height: 18px; line-height: 18px; margin-right: 4px; text-align: center; background: #3a4351; color: #dfe3e8; font-size: 8.5px; font-weight: 500; }
.st-group { display: flex; align-items: center; height: 18px; background: #333d4b; }
.st { display: flex; align-items: center; justify-content: center; width: 18px; height: 18px; flex: none; }
.st.on { background: #5a94c4; }
.st.round { background: #5a94c4; border-radius: 3px; }
.st-caret { margin: 0 3px; }
.g-snap .st { width: 17px; }
.st-angle { margin-left: 4px; }
.g-anno { margin-left: 7px; }
.g-gear .st:first-child { width: 17px; }
.g-shapes { margin-left: 1px; }
.g-dim { margin-left: 4px; }
.g-last { margin-left: 2px; }
.haz { margin-left: 3px; }

/* Taskbar */
.taskbar { display: flex; align-items: center; justify-content: space-between; height: 35px; background: #5c0a6e; flex: none; }
.task-icons { display: flex; align-items: center; padding-left: 8.5px; }
.task { position: relative; display: flex; align-items: center; justify-content: center; width: 33px; height: 33px; flex: none; }
.task.pin::after { content: ""; position: absolute; bottom: 1px; left: 14px; width: 5px; height: 2px; border-radius: 1px; background: #c79ad2; }
.task.current { background: #6a1c7c; }
.task.current::after { left: 11px; width: 11px; background: #e88cf0; }
.chrome { position: relative; display: block; width: 18px; height: 18px; border-radius: 50%; background: conic-gradient(from 30deg, #e33b2e 0 120deg, #f9c21a 120deg 240deg, #2fa44f 240deg 360deg); }
.chrome b { position: absolute; left: 5px; top: 5px; width: 8px; height: 8px; box-sizing: border-box; border-radius: 50%; background: #3b8df0; border: 1px solid #fff; }
.chrome-badge { position: absolute; right: 7px; top: 7px; width: 4px; height: 4px; border-radius: 50%; background: #e8702a; }
.acad { width: 16px; height: 18px; background: #c8102e; color: #fff; font-family: "Liberation Sans", sans-serif; font-weight: bold; font-size: 11px; line-height: 12px; text-align: center; border-radius: 2px; }
.acad small { display: block; font-size: 4px; line-height: 5px; }
.excel { position: relative; width: 18px; height: 16px; background: #21a366; border-radius: 2px; }
.excel b { position: absolute; left: -1px; top: 3px; width: 10px; height: 10px; background: #107c41; color: #fff; font-size: 7px; line-height: 10px; text-align: center; font-family: "Liberation Sans", sans-serif; }

.tray { display: flex; align-items: center; padding-right: 15px; color: #efe4f2; }
.drive { display: flex; align-items: center; justify-content: center; width: 13px; height: 13px; margin: 0 12px 0 11px; background: #f6f6f6; border-radius: 2px; }
.t-mic { margin-right: 14px; }
.t-wifi { margin-right: 5px; }
.t-batt { margin-left: 7px; }
.clock { display: flex; flex-direction: column; align-items: flex-end; width: 53px; margin-right: 6px; font-size: 9px; line-height: 12px; }

/* Overlays */
.balloon { position: absolute; left: 1020px; top: 672px; width: 190px; height: 63px; z-index: 1; box-sizing: border-box; padding: 6px 8px 0 7px; background: #fdfbdc; border-radius: 12px; color: #222; }
.balloon-tail { position: absolute; left: 1150px; top: 734px; width: 17px; height: 15px; z-index: 1; background: #fdfbdc; clip-path: polygon(0 0, 100% 0, 100% 100%); }
.balloon-head { display: flex; align-items: center; height: 14px; }
.balloon-head strong { margin-left: 8px; flex: 1; color: #111; font-size: 8.7px; white-space: nowrap; }
.balloon-x { width: 11px; height: 11px; border: 1px solid #999; box-sizing: border-box; font-size: 8px; font-weight: bold; line-height: 9px; text-align: center; color: #111; background: #fbfbf0; }
.balloon-msg { margin: 5px 0 0 3px; line-height: 12px; font-size: 8.4px; color: #333; }
.balloon-link { display: block; margin: 4px 0 0 3px; line-height: 12px; font-size: 8.5px; color: #2c2cc0; text-decoration: underline; white-space: nowrap; }

.cmd { position: absolute; left: 19px; top: 694px; display: flex; width: 1056px; height: 44px; z-index: 2; }
.cmd-side { display: flex; flex-direction: column; align-items: center; justify-content: space-between; width: 18px; padding: 2px 0 3px; box-sizing: border-box; background: #555d68; }
.cmd-dots { display: block; width: 14px; height: 0; border-top: 1px dotted #aeb6c0; }
.cmd-main { flex: 1; display: flex; flex-direction: column; font-family: "Liberation Mono", monospace; font-size: 9px; border-top: 1px solid #6f6f6f; box-sizing: border-box; }
.cmd-log { height: 26px; padding: 4px 0 0 2px; box-sizing: border-box; line-height: 11.5px; color: #222; background: rgba(225, 225, 225, 0.55); }
.cmd-input { position: relative; display: flex; align-items: center; gap: 2px; height: 17px; padding-left: 3px; border-top: 1px solid #666; box-sizing: border-box; background: rgba(255, 255, 255, 0.75); color: #999; font-style: italic; }
.cmd-caret { border-top-color: #777; }
.cmd-input span { margin-left: 5px; }
.cmd-up { position: absolute; right: 3px; bottom: 4px; width: 0; height: 0; border-left: 2.5px solid transparent; border-right: 2.5px solid transparent; border-bottom: 3px solid #777; }

.loom { position: absolute; left: 496px; top: 725px; display: flex; align-items: center; width: 289px; height: 33px; z-index: 3; padding-left: 8px; box-sizing: border-box; background: #28282c; color: #c9c9cc; }
.pause { display: flex; gap: 2px; margin-right: 7px; }
.pause b { display: block; width: 1.5px; height: 8px; background: #d0d0d4; }
.loom-text { width: 159px; font-size: 8.5px; white-space: nowrap; }
.stop { width: 76px; height: 25px; line-height: 25px; border-radius: 2px; background: #c018d8; color: #fff; font-weight: bold; font-size: 8.4px; text-align: center; }
.hide { margin-left: 7px; color: #a040c0; font-size: 9px; text-decoration: underline; }
```
